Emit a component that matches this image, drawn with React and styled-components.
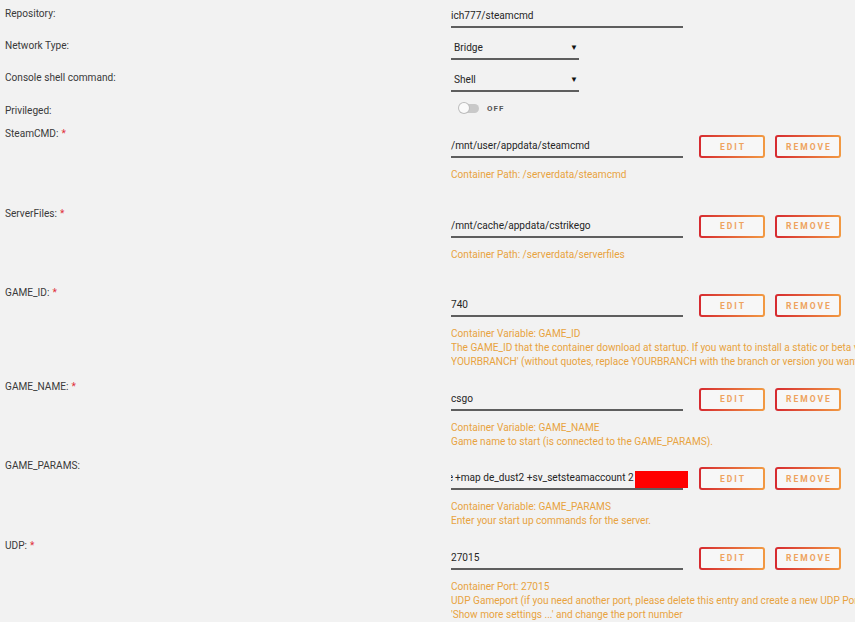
import React from "react";
import styled, { createGlobalStyle } from "styled-components";

const GlobalStyle = createGlobalStyle`
  html, body { margin: 0; padding: 0; background: #f2f2f2; overflow: hidden; }
  body { font-family: Roboto, "Liberation Sans", sans-serif; -webkit-font-smoothing: antialiased; }
`;

const Page = styled.div`
  padding-left: 5px;
  width: 850px;
`;

const Row = styled.div`
  display: grid;
  grid-template-columns: 446px 1fr;
  height: ${(p) => (p.$h ? `${p.$h}px` : "auto")};
  padding-bottom: ${(p) => (p.$h ? "0px" : "3.5px")};
`;

const Label = styled.div`
  font-size: 10.1px;
  line-height: 14px;
  padding-top: 7px;
  color: #3a3a3a;
  white-space: nowrap;
`;

const Required = styled.span`
  color: #e0303a;
  margin-left: 3px;
`;

const Field = styled.div`
  position: relative;
  box-sizing: border-box;
  width: ${(p) => p.$w || 232}px;
  height: 23px;
  margin-top: ${(p) => (p.$simple ? 5 : 0)}px;
  padding-left: ${(p) => (p.$select ? 3 : 0)}px;
  padding-right: 1px;
  border-bottom: 2px solid #5e5e5e;
  display: flex;
  align-items: center;
  justify-content: space-between;
  font-size: 10.1px;
  color: #262626;
  white-space: nowrap;
`;

const Arrow = styled.span`
  font-size: 8px;
  color: #111;
`;

const Content = styled.div`
  padding-top: 15px;
`;

const Controls = styled.div`
  display: flex;
  align-items: stretch;
  height: 23px;
`;

const Buttons = styled.div`
  display: flex;
  gap: 10px;
  margin-left: 16px;
`;

const Button = styled.button`
  box-sizing: border-box;
  width: 66px;
  height: 23px;
  border: 2px solid transparent;
  border-radius: 3px;
  background: linear-gradient(#f7f7f7, #f7f7f7) padding-box,
    linear-gradient(90deg, #d62a30 0%, #f29a42 100%) border-box;
  color: #eea35e;
  font-family: Roboto, "Liberation Sans", sans-serif;
  font-size: 8.5px;
  font-weight: 700;
  letter-spacing: 2px;
  padding: 0 0 0 2px;
  text-transform: uppercase;
  cursor: pointer;
`;

const Desc = styled.div`
  margin-top: 10px;
  font-size: 10.1px;
  line-height: 14px;
  color: #e8a33f;
  white-space: nowrap;
  overflow: hidden;
`;

const ToggleWrap = styled.div`
  display: flex;
  align-items: center;
  gap: 8px;
  margin-top: 7px;
  margin-left: 8px;
  height: 8px;
`;

const Track = styled.div`
  position: relative;
  width: 20px;
  height: 9px;
  border-radius: 4.5px;
  background: #c9c9c9;
`;

const Knob = styled.div`
  position: absolute;
  left: 0;
  top: -0.5px;
  width: 10px;
  height: 10px;
  border-radius: 50%;
  background: #fafafa;
  box-shadow: 0 0 0 1px #bdbdbd;
`;

const ToggleText = styled.span`
  font-size: 8px;
  font-weight: 700;
  letter-spacing: 1px;
  color: #555;
`;

const Sliver = styled.span`
  display: inline-block;
  flex: none;
  width: 2px;
  overflow: hidden;
  direction: rtl;
  margin-right: 2px;
`;

const Redact = styled.div`
  position: absolute;
  left: 184px;
  top: 4px;
  width: 53px;
  height: 17px;
  background: #ff0000;
`;

const Params = styled.span`
  display: flex;
  align-items: center;
  width: 100%;
  overflow: hidden;
`;

function SimpleField({ label, children, h }) {
  return (
    <Row $h={h}>
      <Label>{label}</Label>
      <div>{children}</div>
    </Row>
  );
}

function ConfigRow({ label, required, value, lines }) {
  return (
    <Row>
      <Label>
        {label}
        {required && <Required>*</Required>}
      </Label>
      <Content>
        <Controls>
          <Field>{value}</Field>
          <Buttons>
            <Button>Edit</Button>
            <Button>Remove</Button>
          </Buttons>
        </Controls>
        <Desc>
          {lines.map((l, i) => (
            <div key={i}>{l || "\u00a0"}</div>
          ))}
        </Desc>
      </Content>
    </Row>
  );
}

const rows = [
  {
    label: "SteamCMD:",
    required: true,
    value: "/mnt/user/appdata/steamcmd",
    lines: ["Container Path: /serverdata/steamcmd", ""],
  },
  {
    label: "ServerFiles:",
    required: true,
    value: "/mnt/cache/appdata/cstrikego",
    lines: ["Container Path: /serverdata/serverfiles", ""],
  },
  {
    label: "GAME_ID:",
    required: true,
    value: "740",
    lines: [
      "Container Variable: GAME_ID",
      "The GAME_ID that the container download at startup. If you want to install a static or beta version of the game change the value to: '740 -beta",
      "YOURBRANCH' (without quotes, replace YOURBRANCH with the branch or version you want to install).",
    ],
  },
  {
    label: "GAME_NAME:",
    required: true,
    value: "csgo",
    lines: [
      "Container Variable: GAME_NAME",
      "Game name to start (is connected to the GAME_PARAMS).",
    ],
  },
  {
    label: "GAME_PARAMS:",
    required: false,
    value: (
      <>
        <Params>
          <Sliver>e</Sliver>
          <span>+map de_dust2 +sv_setsteamaccount 2</span>
        </Params>
        <Redact />
      </>
    ),
    lines: [
      "Container Variable: GAME_PARAMS",
      "Enter your start up commands for the server.",
    ],
  },
  {
    label: "UDP:",
    required: true,
    value: "27015",
    lines: [
      "Container Port: 27015",
      "UDP Gameport (if you need another port, please delete this entry and create a new UDP Port with the port that you want to use in",
      "'Show more settings ...' and change the port number",
    ],
  },
];

export default function App() {
  return (
    <>
      <GlobalStyle />
      <Page>
        <SimpleField label="Repository:" h={32}>
          <Field $simple>ich777/steamcmd</Field>
        </SimpleField>
        <SimpleField label="Network Type:" h={32}>
          <Field $simple $select $w={128}>
            <span>Bridge</span>
            <Arrow>▼</Arrow>
          </Field>
        </SimpleField>
        <SimpleField label="Console shell command:" h={33}>
          <Field $simple $select $w={128}>
            <span>Shell</span>
            <Arrow>▼</Arrow>
          </Field>
        </SimpleField>
        <SimpleField label="Privileged:" h={23}>
          <ToggleWrap>
            <Track>
              <Knob />
            </Track>
            <ToggleText>OFF</ToggleText>
          </ToggleWrap>
        </SimpleField>
        {rows.map((r) => (
          <ConfigRow key={r.label} {...r} />
        ))}
      </Page>
    </>
  );
}
